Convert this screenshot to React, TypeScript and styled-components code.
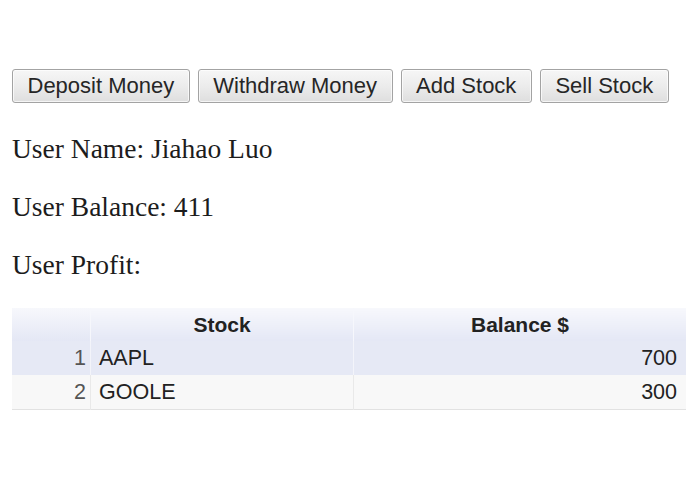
import React from "react";
import styled, { createGlobalStyle } from "styled-components";

const Global = createGlobalStyle`
  html, body { margin: 0; padding: 0; background: #ffffff; }
  body { font-family: "Liberation Serif", "Times New Roman", serif; color: #1a1a1a; }
`;

const Page = styled.div`
  padding: 69px 10px 0 12px;
  display: flex;
  flex-direction: column;
`;

const Toolbar = styled.div`
  display: flex;
  gap: 8px;
`;

const Button = styled.button`
  height: 34px;
  padding: 0 14.5px;
  border: 1px solid #a3a3a3;
  border-radius: 3px;
  background: linear-gradient(to bottom, #f6f6f6 0%, #ececec 50%, #dedede 100%);
  font-family: "Liberation Sans", Arial, sans-serif;
  font-size: 22px;
  color: #262626;
  box-shadow: inset 0 0 0 1px rgba(255, 255, 255, 0.7);
  cursor: pointer;
`;

const Info = styled.div`
  display: flex;
  flex-direction: column;
  gap: 27px;
  margin-top: 30px;
`;

const Line = styled.p`
  margin: 0;
  font-size: 27.5px;
  line-height: 31px;
  color: #1c1c1c;
`;

const Table = styled.table`
  margin-top: 28px;
  width: 672px;
  border-collapse: collapse;
  table-layout: fixed;
  font-family: "Liberation Sans", Arial, sans-serif;
  font-size: 21.5px;
  border-bottom: 1px solid #e2e2e2;
`;

const HeadCell = styled.th<{ $w: number }>`
  width: ${(p) => p.$w}px;
  height: 33px;
  padding: 0;
  font-size: 21px;
  font-weight: bold;
  color: #222;
  text-align: center;
  background: linear-gradient(to bottom, #f7f8fc 0%, #e4e7f5 100%);
  border-left: 1px solid #f6f7fc;
  &:first-child { border-left: none; }
`;

const Row = styled.tr<{ $alt: boolean }>`
  background: ${(p) => (p.$alt ? "#f8f8f8" : "#e6e9f5")};
`;

const Cell = styled.td<{ $align: "left" | "right"; $muted?: boolean; $divider: string }>`
  height: 34px;
  padding: 0 9px 0 8px;
  text-align: ${(p) => p.$align};
  color: ${(p) => (p.$muted ? "#555" : "#222")};
  border-left: 1px solid ${(p) => p.$divider};
  &:first-child { border-left: none; padding-right: 4px; }
`;

const rows = [
  { n: 1, stock: "AAPL", balance: 700 },
  { n: 2, stock: "GOOLE", balance: 300 },
];

export default function App() {
  return (
    <>
      <Global />
      <Page>
        <Toolbar>
          <Button>Deposit Money</Button>
          <Button>Withdraw Money</Button>
          <Button>Add Stock</Button>
          <Button>Sell Stock</Button>
        </Toolbar>
        <Info>
          <Line>User Name: Jiahao Luo</Line>
          <Line>User Balance: 411</Line>
          <Line>User Profit:</Line>
        </Info>
        <Table>
          <thead>
            <tr>
              <HeadCell $w={78}></HeadCell>
              <HeadCell $w={262}>Stock</HeadCell>
              <HeadCell $w={332}>Balance $</HeadCell>
            </tr>
          </thead>
          <tbody>
            {rows.map((r, i) => {
              const alt = i % 2 === 1;
              const div = alt ? "#e9e9e9" : "#f3f4fa";
              return (
                <Row key={r.n} $alt={alt}>
                  <Cell $align="right" $muted $divider={div}>{r.n}</Cell>
                  <Cell $align="left" $divider={div}>{r.stock}</Cell>
                  <Cell $align="right" $divider={div}>{r.balance}</Cell>
                </Row>
              );
            })}
          </tbody>
        </Table>
      </Page>
    </>
  );
}
